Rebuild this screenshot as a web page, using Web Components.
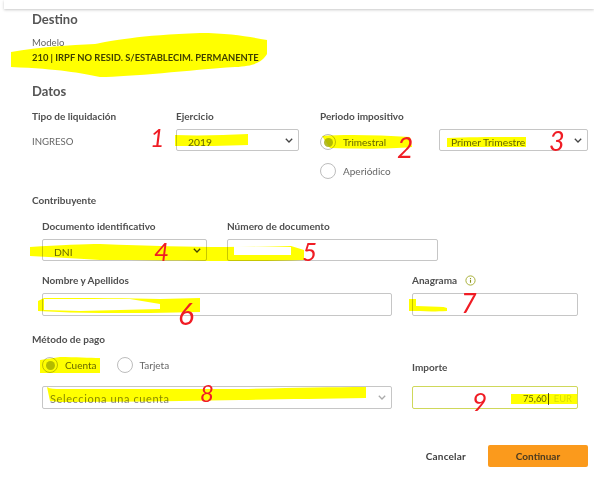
<!DOCTYPE html>
<html lang="es"><head><meta charset="utf-8"><title>Destino</title>
<style>
html,body{margin:0;background:#fff}
body{width:594px;height:478px;overflow:hidden;position:relative;font:10px/14px "Lato","Open Sans",sans-serif;color:#555}
</style></head><body>
<x-form></x-form>
<x-annotations></x-annotations>
<script>
function def(name,css,html){customElements.define(name,class extends HTMLElement{
  constructor(){super();const r=this.attachShadow({mode:'open'});
    r.innerHTML=`<style>${css}</style>`+html;}
})}
def('x-heading',`:host{display:block;font-size:13px;line-height:18px;font-weight:700;color:#555}`,`<slot></slot>`);
def('x-label',`:host{display:block;font-size:10px;line-height:14px;font-weight:700;color:#4f4f4f}
  :host([plain]){font-weight:400;color:#666;font-size:9.6px}
  :host([strong]){font-weight:700;color:#3f3f3f;font-size:9.4px}`,`<slot></slot>`);
def('x-select',`:host{display:flex;box-sizing:border-box;height:var(--h,22px);align-items:center;justify-content:space-between;border:1px solid #c6c6c6;border-radius:2px;padding:0 5px 0 var(--pl,11px);background:#fff;color:#666;font-size:var(--fs,10.3px);letter-spacing:var(--ls,0)}
  span{padding-top:3px}
  svg{flex:none;stroke:var(--ch,#444)}`,`<span><slot></slot></span><svg width="8" height="5" viewBox="0 0 8 5" fill="none" stroke-width="1.3"><path d="M.8.8 4 4 7.2.8"/></svg>`);
def('x-input',`:host{display:flex;box-sizing:border-box;height:var(--h,22px);align-items:center;justify-content:flex-end;border:1px solid #c6c6c6;border-radius:2px;padding:2px 4px 0;background:#fff;color:#666;font-size:10px}
  :host([active]){border-color:#cfd85a}`,`<slot></slot>`);
def('x-radio',`:host{display:inline-flex;align-items:center;gap:7px;height:22px;color:#666;font-size:10px}
  i{box-sizing:border-box;width:16px;height:16px;border:1px solid #bdbdbd;border-radius:50%;display:flex;align-items:center;justify-content:center;background:#fff}
  b{display:none;width:9px;height:9px;border-radius:50%;background:#b3bb30}
  :host([checked]) b{display:block}`,`<i><b></b></i><slot></slot>`);
def('x-button',`:host{display:flex;box-sizing:border-box;width:100px;height:22px;align-items:center;justify-content:center;background:#fb9a1c;border-radius:2px;font-weight:700;color:#4a3a20;font-size:10px}`,`<slot></slot>`);
def('x-info',`:host{display:inline-flex;width:11px;height:11px}`,`<svg width="11" height="11" viewBox="0 0 11 11"><circle cx="5.5" cy="5.5" r="4.6" fill="#fff" stroke="#a9b13a"/><path d="M5.5 3v.9M5.5 4.8v3" stroke="#8b9320" stroke-width="1.1"/></svg>`);
def('x-form',`:host{display:block;box-sizing:border-box;width:594px;height:478px;padding:10px 6px 0 32px}
  .bar{position:absolute;left:4px;right:0;top:0;height:9px;background:#fff;box-shadow:0 1px 3px rgba(0,0,0,.22)}
  .m8{margin-top:8px}.m1{margin-top:1px}.m17{margin-top:17px}
  .per{display:flex;margin-top:9px}
  .c1{width:144px}.c2{width:123px;margin-right:21px}.c3{width:119px}.c4{width:149px}
  .ctl{margin-top:6px}
  .radios{display:flex;flex-direction:column;gap:7px;margin-top:8px}
  .sub{margin-left:10px}
  .row{display:flex;gap:20px}
  .ch{display:flex;align-items:center;gap:8px}
  .pay{display:flex;gap:20px;align-items:flex-end}
  .pr{display:flex;gap:20px;margin-bottom:10px}
  .foot{display:flex;justify-content:flex-end;align-items:center;gap:22px;margin-top:36px}
  .cancel{font-weight:700;color:#3f3f3f;font-size:10px;letter-spacing:.2px}
  .caret{display:inline-block;width:1px;height:12px;background:#555;margin:0 5px 0 1px;vertical-align:-2px}
  .eur{color:#d9df7a;margin-right:1px;font-size:9.4px}
  .amt{color:#666;font-size:9.4px}`,`
  <div class="bar"></div>
  <x-heading>Destino</x-heading>
  <x-label plain class="m8">Modelo</x-label>
  <x-label strong class="m1">210 | IRPF NO RESID. S/ESTABLECIM. PERMANENTE</x-label>
  <x-heading class="m17">Datos</x-heading>
  <div class="per">
    <div class="c1"><x-label>Tipo de liquidación</x-label><x-label plain class="ctl" style="line-height:26px">INGRESO</x-label></div>
    <div class="c2"><x-label>Ejercicio</x-label><x-select class="ctl">2019</x-select></div>
    <div class="c3"><x-label>Periodo impositivo</x-label><div class="radios"><x-radio checked>Trimestral</x-radio><x-radio>Aperiódico</x-radio></div></div>
    <div class="c4"><x-label style="visibility:hidden">&nbsp;</x-label><x-select class="ctl">Primer Trimestre</x-select></div>
  </div>
  <x-label style="margin-top:11px">Contribuyente</x-label>
  <div class="sub">
    <div class="row" style="margin-top:12px">
      <div style="width:165px"><x-label>Documento identificativo</x-label><x-select class="ctl">DNI</x-select></div>
      <div style="width:211px"><x-label>Número de documento</x-label><x-input class="ctl"></x-input></div>
    </div>
    <div class="row" style="margin-top:12px">
      <div style="width:350px"><x-label>Nombre y Apellidos</x-label><x-input class="ctl" style="--h:23px"></x-input></div>
      <div style="width:166px"><x-label class="ch">Anagrama <x-info></x-info></x-label><x-input class="ctl" style="--h:23px"></x-input></div>
    </div>
  </div>
  <x-label style="margin-top:16px">Método de pago</x-label>
  <div class="sub pay">
    <div style="width:350px">
      <div class="pr" style="margin-top:8px"><x-radio checked>Cuenta</x-radio><x-radio>Tarjeta</x-radio></div>
      <x-select style="--h:23px;--pl:7px;--ch:#aaa;--fs:11px;--ls:.6px;color:#888">Selecciona una cuenta</x-select>
    </div>
    <div style="width:166px"><x-label>Importe</x-label>
      <x-input active class="ctl" style="--h:23px;margin-top:12px"><span class="amt">75,60</span><span class="caret"></span><span class="eur">EUR</span></x-input></div>
  </div>
  <div class="foot"><span class="cancel">Cancelar</span><x-button>Continuar</x-button></div>`);
def('x-annotations',`:host{position:absolute;inset:0;display:block;pointer-events:none}
  svg{position:absolute;left:0;top:0}
  .y{mix-blend-mode:multiply}
  text{font-family:"Lato","Liberation Sans",sans-serif;font-weight:400;fill:#f01c24;font-style:italic}`,`
  <svg class="y" width="594" height="478" viewBox="0 0 594 478" fill="#ffff00">
    <path d="M11 52C40 47 70 45 95 44 110 41 140 35 200 33 230 33 250 37 267 40V54C262 62 255 66 235 67 190 70 130 77 100 77 80 73 60 69 11 67Z"/>
    <path d="M175 135C200 136 225 135 248 134V145C225 146 200 146 175 146Z"/>
    <path d="M322 136C345 134 380 135 410 137L412 147C390 149 360 149 330 148Z"/>
    <path d="M447 138C470 137 500 137 526 137V147C500 147 470 147 447 147Z"/>
    <path d="M30 247C60 245 85 244 100 244 150 246 190 247 225 247L291 246 304 250V260C280 261 255 261 230 261 180 261 140 260 100 260 80 259 55 257 30 256Z"/>
    <path d="M38 301 44 298C90 298 130 298 160 299L200 298V312C170 313 130 313 100 313 80 313 60 312 38 311Z"/>
    <path d="M409 299 416 299 447 308V311C430 312 420 311 409 311Z"/>
    <path d="M40 360 60 357C75 357 90 358 100 358V373L40 373Z"/>
    <path d="M47 387C50 389 55 389 60 389 120 389 180 389 240 389 290 388 330 387 366 387V398C320 399 280 399 240 400 180 401 120 402 60 402L50 401Z"/>
    <path d="M511 394H577V404H511Z"/>
  </svg>
  <svg width="594" height="478" viewBox="0 0 594 478">
    <path fill="#fff" d="M234 246 291 247 291 255 234 255Z"/>
    <path fill="#fff" d="M44 299 130 299 160 304V309L80 311 44 310Z"/>
    <path fill="#fff" d="M416 299H445V307L416 306Z"/>
    <text x="150" y="147" font-size="25">1</text>
    <text x="397" y="158" font-size="28">2</text>
    <text x="549" y="151" font-size="27">3</text>
    <text x="154" y="261" font-size="26">4</text>
    <text x="302" y="261" font-size="26">5</text>
    <text x="178" y="325" font-size="30">6</text>
    <text x="461" y="313" font-size="27">7</text>
    <text x="200" y="402" font-size="24">8</text>
    <text x="472" y="411" font-size="26">9</text>
  </svg>`);
</script>
</body></html>
